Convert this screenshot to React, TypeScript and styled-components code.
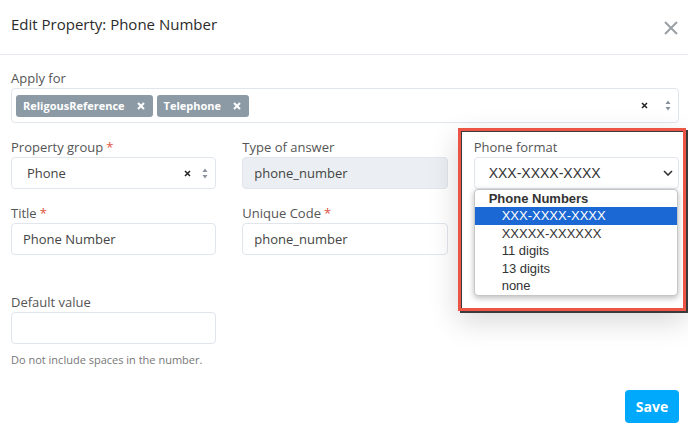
import styled, { createGlobalStyle } from "styled-components";

const GlobalStyle = createGlobalStyle`
  html, body {
    margin: 0;
    padding: 0;
    background: #ffffff;
  }
  body {
    font-family: "Open Sans", "Liberation Sans", sans-serif;
  }
`;

export const Modal = styled.div`
  position: relative;
  width: 688px;
  height: 437px;
  background: #ffffff;
  overflow: hidden;
`;

export const Header = styled.div`
  display: flex;
  align-items: center;
  justify-content: space-between;
  height: 54px;
  padding: 0 9px 0 11px;
  border-bottom: 1px solid #e6eaef;
`;

export const Title = styled.h1`
  margin: 0 0 7px;
  font-size: 15px;
  font-weight: 400;
  color: #2b2b2b;
`;

export const CloseButton = styled.button`
  display: flex;
  border: 0;
  background: none;
  padding: 0;
  margin-top: 1px;
  cursor: pointer;
`;

export const Body = styled.div`
  padding: 15px 9px 0 11px;
`;

export const Field = styled.div`
  position: relative;
  display: flex;
  flex-direction: column;
`;

export const Label = styled.label`
  font-size: 13px;
  line-height: 16px;
  color: #555;
  margin-bottom: 2px;
`;

export const Required = styled.span`
  color: #e0533f;
  margin-left: 3px;
`;

export const Grid = styled.div`
  display: grid;
  grid-template-columns: repeat(3, 1fr);
  column-gap: 26px;
  row-gap: 16px;
  margin-top: 16px;
`;

export const Box = styled.div<{ $disabled?: boolean; $h?: number }>`
  display: flex;
  align-items: center;
  box-sizing: border-box;
  height: ${(p) => p.$h ?? 32}px;
  padding: 0 7px 0 11px;
  border: 1px solid #e1e6ec;
  border-radius: 4px;
  background: ${(p) => (p.$disabled ? "#ebeef2" : "#fff")};
  font-size: 13px;
  color: #444;
`;

export const Value = styled.span<{ $pad?: number }>`
  flex: 1;
  padding-left: ${(p) => p.$pad ?? 0}px;
`;

export const Tags = styled.div`
  display: flex;
  gap: 4px;
  flex: 1;
`;

export const Tag = styled.span`
  display: inline-flex;
  align-items: center;
  gap: 12px;
  height: 22px;
  padding: 0 8px 0 7px;
  border-radius: 3px;
  background: #8c9aa5;
  color: #fff;
  font-size: 11px;
  font-weight: 700;
`;

export const Controls = styled.span<{ $gap?: number }>`
  display: flex;
  align-items: center;
  gap: ${(p) => p.$gap ?? 17}px;
`;

export const NativeSelect = styled(Box)`
  font-family: "Liberation Sans", Arial, sans-serif;
  font-size: 14px;
  color: #333;
  padding: 0 5px 0 14px;
`;

export const Dropdown = styled.ul`
  position: absolute;
  top: 50px;
  left: 0;
  width: 204px;
  box-sizing: border-box;
  margin: 0;
  padding: 0;
  list-style: none;
  background: #fff;
  border: 1px solid #c6c6c6;
  border-radius: 4px;
  box-shadow: 0 2px 6px rgba(0, 0, 0, 0.28);
  font-family: "Liberation Sans", Arial, sans-serif;
  font-size: 13px;
  color: #333;
`;

export const Group = styled.li`
  padding-left: 14px;
  height: 17px;
  line-height: 17px;
  font-weight: 700;
`;

export const Option = styled.li<{ $active?: boolean }>`
  padding-left: 27px;
  height: 17.5px;
  line-height: 17.5px;
  background: ${(p) => (p.$active ? "#1b67d3" : "transparent")};
  color: ${(p) => (p.$active ? "#fff" : "#333")};
`;

export const DefaultField = styled(Field)`
  width: 205px;
  margin-top: 39px;
`;

export const Help = styled.p`
  margin: 8px 0 0;
  font-size: 11px;
  color: #777;
`;

export const Footer = styled.div`
  display: flex;
  justify-content: flex-end;
  padding: 23px 0 0;
`;

export const SaveButton = styled.button`
  width: 54px;
  height: 33px;
  border: 0;
  border-radius: 4px;
  background: #00a9fb;
  color: #fff;
  font-family: "Open Sans", sans-serif;
  font-size: 14px;
  font-weight: 700;
`;

export const Highlight = styled.div`
  position: absolute;
  left: 458px;
  top: 128px;
  width: 228px;
  height: 183px;
  box-shadow: 0 10px 28px rgba(0, 0, 0, 0.16);
  pointer-events: none;

  &::before,
  &::after {
    content: "";
    position: absolute;
    box-sizing: border-box;
  }

  &::before {
    left: 2px;
    top: 2px;
    width: 228px;
    height: 183px;
    border: 2px solid #3a3a3a;
  }

  &::after {
    inset: 0;
    border: 3px solid #ec5446;
  }
`;

const UpDown = () => (
  <svg width="6" height="11" viewBox="0 0 6 11">
    <path d="M3 0.5 L5.5 4 H0.5 Z" fill="#8a9099" />
    <path d="M3 10.5 L5.5 7 H0.5 Z" fill="#8a9099" />
  </svg>
);

const SmallX = () => (
  <svg width="7" height="7" viewBox="0 0 7 7">
    <path d="M1 1 L6 6 M6 1 L1 6" stroke="#222" strokeWidth="1.5" />
  </svg>
);

const TagX = () => (
  <svg width="8" height="8" viewBox="0 0 8 8">
    <path d="M1 1 L7 7 M7 1 L1 7" stroke="#fff" strokeWidth="2" />
  </svg>
);

const Chevron = () => (
  <svg width="10" height="6" viewBox="0 0 10 6">
    <path d="M1 1 L5 5 L9 1" stroke="#333" strokeWidth="1.6" fill="none" />
  </svg>
);

export default function App() {
  return (
    <Modal>
      <GlobalStyle />
      <Header>
        <Title>Edit Property: Phone Number</Title>
        <CloseButton>
          <svg width="16" height="16" viewBox="0 0 16 16">
            <path d="M2 2 L14 14 M14 2 L2 14" stroke="#9aa0a6" strokeWidth="2" />
          </svg>
        </CloseButton>
      </Header>
      <Body>
        <Field>
          <Label>Apply for</Label>
          <Box $h={35} style={{ paddingLeft: 4 }}>
            <Tags>
              <Tag>
                ReligousReference <TagX />
              </Tag>
              <Tag>
                Telephone <TagX />
              </Tag>
            </Tags>
            <Controls>
              <SmallX />
              <UpDown />
            </Controls>
          </Box>
        </Field>
        <Grid>
          <Field>
            <Label>
              Property group<Required>*</Required>
            </Label>
            <Box>
              <Value $pad={4}>Phone</Value>
              <Controls $gap={11}>
                <SmallX />
                <UpDown />
              </Controls>
            </Box>
          </Field>
          <Field>
            <Label>Type of answer</Label>
            <Box $disabled>
              <Value>phone_number</Value>
            </Box>
          </Field>
          <Field>
            <Label>Phone format</Label>
            <NativeSelect>
              <Value>XXX-XXXX-XXXX</Value>
              <Chevron />
            </NativeSelect>
            <Dropdown>
              <Group>Phone Numbers</Group>
              <Option $active>XXX-XXXX-XXXX</Option>
              <Option>XXXXX-XXXXXX</Option>
              <Option>11 digits</Option>
              <Option>13 digits</Option>
              <Option>none</Option>
            </Dropdown>
          </Field>
          <Field>
            <Label>
              Title<Required>*</Required>
            </Label>
            <Box>
              <Value>Phone Number</Value>
            </Box>
          </Field>
          <Field>
            <Label>
              Unique Code<Required>*</Required>
            </Label>
            <Box>
              <Value>phone_number</Value>
            </Box>
          </Field>
        </Grid>
        <DefaultField>
          <Label>Default value</Label>
          <Box />
          <Help>Do not include spaces in the number.</Help>
        </DefaultField>
        <Footer>
          <SaveButton>Save</SaveButton>
        </Footer>
      </Body>
      <Highlight />
    </Modal>
  );
}
